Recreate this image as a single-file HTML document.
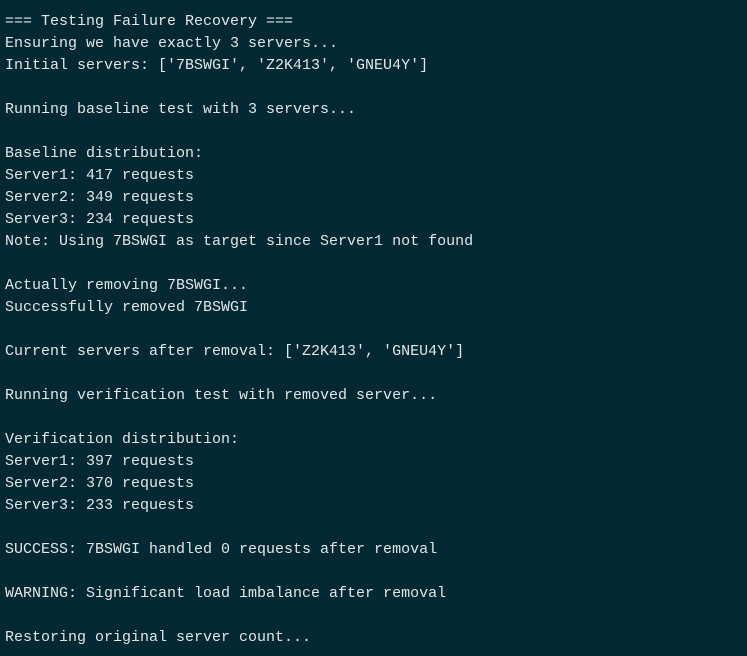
<!DOCTYPE html>
<html><head><style>
html,body{margin:0;padding:0;}
body{width:747px;height:656px;background:#012833;overflow:hidden;}
pre{margin:0;padding:11px 0 0 5px;font-family:"Liberation Mono",monospace;font-size:15px;line-height:22px;color:#e3e6e6;}
</style></head><body><pre>=== Testing Failure Recovery ===
Ensuring we have exactly 3 servers...
Initial servers: ['7BSWGI', 'Z2K413', 'GNEU4Y']

Running baseline test with 3 servers...

Baseline distribution:
Server1: 417 requests
Server2: 349 requests
Server3: 234 requests
Note: Using 7BSWGI as target since Server1 not found

Actually removing 7BSWGI...
Successfully removed 7BSWGI

Current servers after removal: ['Z2K413', 'GNEU4Y']

Running verification test with removed server...

Verification distribution:
Server1: 397 requests
Server2: 370 requests
Server3: 233 requests

SUCCESS: 7BSWGI handled 0 requests after removal

WARNING: Significant load imbalance after removal

Restoring original server count...</pre></body></html>
